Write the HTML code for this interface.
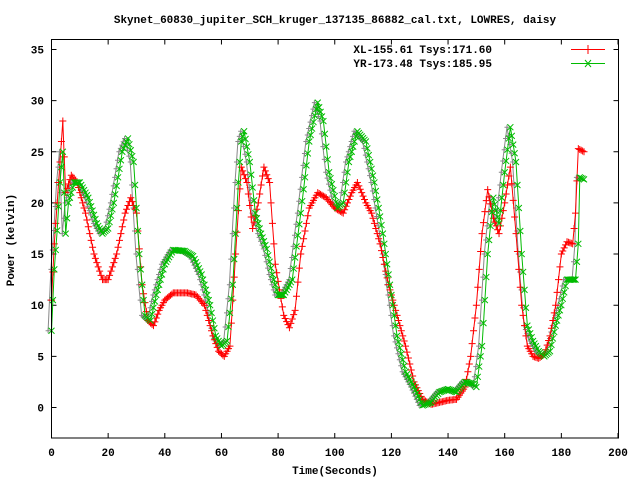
<!DOCTYPE html>
<html><head><meta charset="utf-8"><style>
html,body{margin:0;padding:0;background:#fff;width:640px;height:480px;overflow:hidden}
svg text{font-family:"Liberation Mono","DejaVu Sans Mono",monospace;font-size:11px;font-weight:bold;fill:#000}
</style></head><body>
<svg id="s" width="640" height="480" xmlns="http://www.w3.org/2000/svg">
<text x="335" y="23" text-anchor="middle">Skynet_60830_jupiter_SCH_kruger_137135_86882_cal.txt, LOWRES, daisy</text>
<text x="14" y="240" text-anchor="middle" transform="rotate(-90 14 240)">Power (kelvin)</text>
<text x="335" y="474" text-anchor="middle">Time(Seconds)</text>
<text x="492" y="53" text-anchor="end">XL-155.61 Tsys:171.60</text>
<text x="492" y="67" text-anchor="end">YR-173.48 Tsys:185.95</text>
<line x1="571" y1="49.5" x2="605" y2="49.5" stroke="#f00"/>
<line x1="588" y1="45" x2="588" y2="54" stroke="#f00"/>
<line x1="571" y1="63.5" x2="605" y2="63.5" stroke="#0b0"/>
<path d="M585 60L591 67M591 60L585 67" stroke="#0b0"/>
<g id="ax" stroke="#000" fill="none"></g>
<g id="d"></g>
<rect x="51.5" y="39.5" width="567" height="398.5" fill="none" stroke="#000"/>
</svg>
<script>
var NS="http://www.w3.org/2000/svg",s=document.getElementById('s'),ax=document.getElementById('ax'),d=document.getElementById('d');
function X(t){return 51.5+t*2.8325}function Y(v){return 407.5-v*10.23}
function el(p,n,a,txt){var e=document.createElementNS(NS,n);for(var k in a)e.setAttribute(k,a[k]);if(txt!=null)e.textContent=txt;p.appendChild(e);return e}
for(var v=0;v<=35;v+=5){var y=Y(v);el(ax,'path',{d:'M51.5 '+y+'h5M618.5 '+y+'h-5'});el(s,'text',{x:44,y:y+4,'text-anchor':'end'},v)}
for(var t=0;t<=200;t+=20){var x=X(t);el(ax,'path',{d:'M'+x+' 438v-5M'+x+' 39.5v5'});el(s,'text',{x:x,y:456,'text-anchor':'middle'},t)}
var R=[[0,10.5],[1,16],[2,20],[3,24],[4,28],[5,21],[7,22.7],[9,22],[12,19],[15,15],[18,12.5],[20,12.5],[23,15],[26,19],[28,20.5],[30,19],[32,12],[34,8.5],[36,8],[38,9.5],[40,10.5],[43,11.2],[48,11.2],[51,11],[54,10],[57,7],[59,5.5],[61,5],[63,6],[65,15],[67,23.5],[69,22],[71,17.5],[73,20],[75,23.5],[77,22],[79,14],[82,9],[84,7.8],[86,9.5],[88,15],[91,19.5],[94,21],[97,20.5],[100,19.5],[103,19],[106,21],[108,22],[111,20],[113,19],[116,16],[119,12],[122,9],[125,6],[128,2.5],[131,0.8],[134,0.3],[137,0.5],[140,0.7],[143,0.8],[146,2],[148,5],[150,10],[152,17],[154,21.3],[156,18.5],[158,17],[160,20],[162,23.5],[164,17],[166,10],[168,6],[170,5],[172,4.8],[174,5.2],[176,7],[178,10],[180,15],[182,16.2],[184,16],[185,19],[186,25.3],[188,25]];
var G=[[0,7.5],[1,13.5],[2,17.3],[3,22],[4,25],[5,17],[6,20],[8,22],[10,22],[13,20.5],[16,18],[18,17],[20,17.5],[22,20],[25,25],[27,26.3],[29,24],[31,15],[33,9],[35,8.5],[37,11],[40,14],[43,15.4],[47,15.3],[50,14.8],[53,13],[56,10],[58,7],[60,6],[62,6.5],[64,12],[66,22],[67,26],[68,27],[70,24],[72,19],[74,17],[76,15.5],[78,13],[80,11],[82,11],[85,12.5],[88,19],[91,26],[94,29.8],[96,28],[98,23],[101,19.5],[103,20],[105,24],[108,27],[111,26],[114,22],[117,17],[120,11],[122,7],[125,3.5],[128,2],[131,0.2],[134,0.5],[137,1.5],[140,1.8],[143,1.5],[146,2.5],[149,2.3],[150,2],[152,6],[154,15],[156,20.5],[158,18],[160,23],[162,27.4],[164,24],[166,15],[168,8],[170,6.5],[172,5.5],[174,5],[176,5.5],[178,8],[180,10],[182,12.5],[185,12.5],[186,16],[186.5,22.5],[188,22.3]];
function interp(P,t){for(var i=1;i<P.length;i++)if(P[i][0]>=t){var a=P[i-1],b=P[i],f=(t-a[0])/(b[0]-a[0]);return a[1]+f*(b[1]-a[1])}return P[P.length-1][1]}
function draw(P,col,kind,sh,sz){var pts=[],m='';for(var t=0;t<=188;t+=0.5){var x=X(t+sh),y=Y(interp(P,t));pts.push(x.toFixed(1)+','+y.toFixed(1));
if(kind=='+')m+='M'+(x-sz)+' '+y+'h'+2*sz+'M'+x+' '+(y-sz)+'v'+2*sz;else m+='M'+(x-sz)+' '+(y-sz)+'l'+2*sz+' '+2*sz+'M'+(x-sz)+' '+(y+sz)+'l'+2*sz+' '+(-2*sz);}
el(d,'polyline',{points:pts.join(' '),fill:'none',stroke:col,'stroke-width':1});el(d,'path',{d:m,fill:'none',stroke:col,'stroke-width':1})}
draw(G,'#888','+',-1.2,2.5);
draw(R,'#f00','+',0,3.5);
draw(G,'#0b0','x',0,3);
</script>
</body></html>
